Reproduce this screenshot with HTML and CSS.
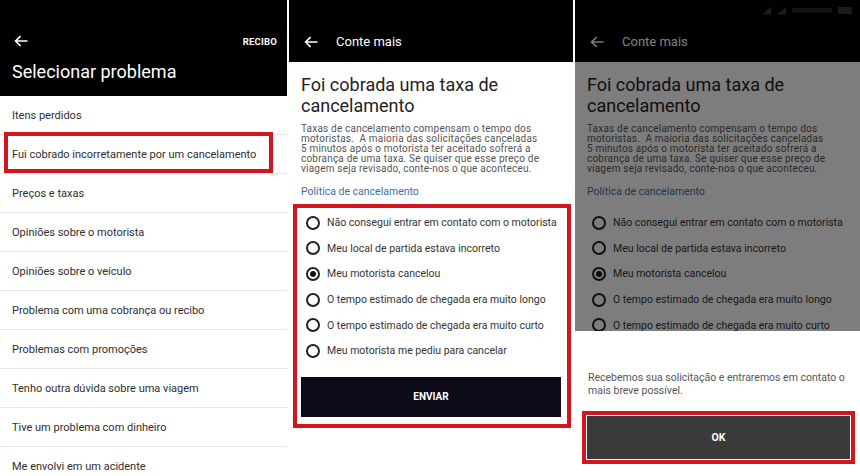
FILE: index.html
```html
<!DOCTYPE html>
<html lang="pt-br">

<head>
    <meta charset="UTF-8">
    <meta name="viewport" content="width=device-width, initial-scale=1.0">
    <title>Cancelamento</title>
    <link rel="stylesheet" href="styles.css">
</head>

<body>
    <div class="screens">
        <!-- tela 1: lista de problemas -->
        <section class="screen screen-list">
            <header class="list-header">
                <div class="status"></div>
                <div class="toolbar">
                    <svg class="back" viewBox="0 0 14 12"><path d="M13.5 6H1.8M6.6 1L1.6 6l5 5" /></svg>
                    <span class="receipt">RECIBO</span>
                </div>
                <h1 class="list-title">Selecionar problema</h1>
            </header>
            <ul class="problems">
                <li>Itens perdidos</li>
                <li class="marked">Fui cobrado incorretamente por um cancelamento</li>
                <li>Preços e taxas</li>
                <li>Opiniões sobre o motorista</li>
                <li>Opiniões sobre o veículo</li>
                <li>Problema com uma cobrança ou recibo</li>
                <li>Problemas com promoções</li>
                <li>Tenho outra dúvida sobre uma viagem</li>
                <li>Tive um problema com dinheiro</li>
                <li>Me envolvi em um acidente</li>
            </ul>
        </section>

        <!-- tela 2: formulário -->
        <section class="screen screen-form">
            <header class="form-header">
                <div class="status"></div>
                <div class="toolbar">
                    <svg class="back" viewBox="0 0 14 12"><path d="M13.5 6H1.8M6.6 1L1.6 6l5 5" /></svg>
                    <span class="toolbar-title">Conte mais</span>
                </div>
            </header>
            <div class="form-body">
                <h2 class="form-title">Foi cobrada uma taxa de<br>cancelamento</h2>
                <p class="form-text">Taxas de cancelamento compensam o tempo dos<br>motoristas.&nbsp; A maioria das solicitações canceladas<br>5 minutos após o motorista ter aceitado sofrerá a<br>cobrança de uma taxa. Se quiser que esse preço de<br>viagem seja revisado, conte-nos o que aconteceu.</p>
                <a class="policy">Política de cancelamento</a>
                <div class="choice-box marked">
                    <ul class="reasons">
                        <li><span class="radio"></span>Não consegui entrar em contato com o motorista</li>
                        <li><span class="radio"></span>Meu local de partida estava incorreto</li>
                        <li><span class="radio checked"></span>Meu motorista cancelou</li>
                        <li><span class="radio"></span>O tempo estimado de chegada era muito longo</li>
                        <li><span class="radio"></span>O tempo estimado de chegada era muito curto</li>
                        <li><span class="radio"></span>Meu motorista me pediu para cancelar</li>
                    </ul>
                    <button class="send">ENVIAR</button>
                </div>
            </div>
        </section>

        <!-- tela 3: confirmação -->
        <section class="screen screen-done">
            <header class="form-header">
                <div class="status">
                    <span class="icon-sig"></span>
                    <span class="icon-sig"></span>
                    <span class="icon-bar"></span>
                    <span class="icon-bat"></span>
                </div>
                <div class="toolbar">
                    <svg class="back" viewBox="0 0 14 12"><path d="M13.5 6H1.8M6.6 1L1.6 6l5 5" /></svg>
                    <span class="toolbar-title">Conte mais</span>
                </div>
            </header>
            <div class="form-body">
                <h2 class="form-title">Foi cobrada uma taxa de<br>cancelamento</h2>
                <p class="form-text">Taxas de cancelamento compensam o tempo dos<br>motoristas.&nbsp; A maioria das solicitações canceladas<br>5 minutos após o motorista ter aceitado sofrerá a<br>cobrança de uma taxa. Se quiser que esse preço de<br>viagem seja revisado, conte-nos o que aconteceu.</p>
                <a class="policy">Política de cancelamento</a>
                <div class="choice-box">
                    <ul class="reasons">
                        <li><span class="radio"></span>Não consegui entrar em contato com o motorista</li>
                        <li><span class="radio"></span>Meu local de partida estava incorreto</li>
                        <li><span class="radio checked"></span>Meu motorista cancelou</li>
                        <li><span class="radio"></span>O tempo estimado de chegada era muito longo</li>
                        <li><span class="radio"></span>O tempo estimado de chegada era muito curto</li>
                        <li><span class="radio"></span>Meu motorista me pediu para cancelar</li>
                    </ul>
                </div>
            </div>
            <div class="overlay"></div>
            <div class="sheet">
                <p class="sheet-text">Recebemos sua solicitação e entraremos em contato o<br>mais breve possível.</p>
                <div class="ok-box">
                    <button class="ok">OK</button>
                </div>
            </div>
        </section>
    </div>
</body>

</html>
```

FILE: styles.css
```css
* {
    padding: 0;
    margin: 0;
    box-sizing: border-box;
    font-family: 'Roboto', 'Liberation Sans', sans-serif;
}

body {
    width: 860px;
    height: 476px;
    overflow: hidden;
    background-color: #ffffff;
}

.screens {
    display: flex;
    gap: 2px;
    height: 476px;
}

.screen {
    position: relative;
    overflow: hidden;
    background-color: #ffffff;
}

.screen-list {
    width: 287px;
}

.screen-form {
    width: 284px;
}

.screen-done {
    width: 285px;
}

.status {
    height: 21px;
}

.toolbar {
    height: 41px;
    display: flex;
    align-items: center;
    padding: 0 10px 0 15px;
}

.back {
    width: 14px;
    height: 12px;
    fill: none;
    stroke: #ffffff;
    stroke-width: 1.7;
}

/* tela 1 */
.list-header {
    background-color: #000000;
    color: #ffffff;
    padding-bottom: 14px;
}

.list-header .toolbar {
    height: 40px;
    padding-left: 14px;
}

.receipt {
    margin-left: auto;
    font-size: 9.5px;
    font-weight: bold;
    letter-spacing: 0.2px;
}

.list-title {
    font-size: 18px;
    font-weight: normal;
    line-height: 21px;
    padding-left: 12px;
}

.problems {
    list-style: none;
}

.problems li {
    position: relative;
    height: 39px;
    display: flex;
    align-items: center;
    padding-left: 12px;
    border-bottom: 1px solid #e6e6e6;
    font-size: 11px;
    color: #2e2e2e;
}

.problems li.marked::after {
    content: '';
    position: absolute;
    left: 4px;
    right: 14px;
    top: -3px;
    bottom: 0;
    border: 4px solid #d2151e;
}

/* telas 2 e 3 */
.form-header {
    background-color: #000000;
    color: #ffffff;
}

.toolbar-title {
    margin-left: 18px;
    font-size: 13px;
}

.form-body {
    padding: 12px 12px 0;
}

.form-title {
    font-size: 18px;
    font-weight: normal;
    line-height: 21px;
    color: #222222;
}

.form-text {
    margin-top: 8px;
    font-size: 10px;
    line-height: 10px;
    letter-spacing: 0.2px;
    color: #555555;
}

.policy {
    display: block;
    margin-top: 11px;
    font-size: 10.5px;
    line-height: 13px;
    color: #3b6ea6;
}

.choice-box {
    margin: 6px -10px 0 -8px;
    padding: 2px 6px 7px 4px;
    border: 4px solid transparent;
}

.choice-box.marked {
    border-color: #d2151e;
}

.reasons {
    list-style: none;
}

.reasons li {
    height: 25.6px;
    display: flex;
    align-items: center;
    gap: 7px;
    padding-left: 5px;
    font-size: 10.5px;
    color: #333333;
}

.radio {
    width: 14px;
    height: 14px;
    border: 2px solid #222222;
    border-radius: 50%;
    display: flex;
    justify-content: center;
    align-items: center;
    flex-shrink: 0;
}

.radio.checked::after {
    content: '';
    width: 6px;
    height: 6px;
    border-radius: 50%;
    background-color: #111111;
}

.send {
    display: block;
    width: 100%;
    height: 40px;
    margin-top: 13px;
    border: none;
    background-color: #0c0c18;
    color: #ffffff;
    font-size: 10px;
    font-weight: bold;
}

/* tela 3 */
.screen-done .status {
    display: flex;
    justify-content: flex-end;
    align-items: center;
    gap: 6px;
    padding-right: 8px;
}

.icon-sig {
    width: 9px;
    height: 8px;
    background-color: #3a3a3a;
    clip-path: polygon(100% 0, 100% 100%, 0 100%);
}

.icon-bar {
    width: 40px;
    height: 5px;
    background-color: #2a2a2a;
}

.icon-bat {
    width: 14px;
    height: 7px;
    background-color: #3a3a3a;
}

.overlay {
    position: absolute;
    inset: 0;
    background-color: rgba(0, 0, 0, 0.51);
}

.sheet {
    position: absolute;
    left: 0;
    right: 0;
    bottom: 0;
    height: 145px;
    background-color: #ffffff;
    padding: 40px 13px 0;
}

.sheet-text {
    font-size: 10.5px;
    line-height: 13px;
    color: #555555;
}

.ok-box {
    margin: 14px 0 0 -6px;
    width: 273px;
    padding: 1px;
    border: 4px solid #d2151e;
    background-color: #ffffff;
}

.ok {
    display: block;
    width: 100%;
    height: 43px;
    border: none;
    background-color: #3a3a3a;
    color: #ffffff;
    font-size: 10.5px;
    font-weight: bold;
}
```
